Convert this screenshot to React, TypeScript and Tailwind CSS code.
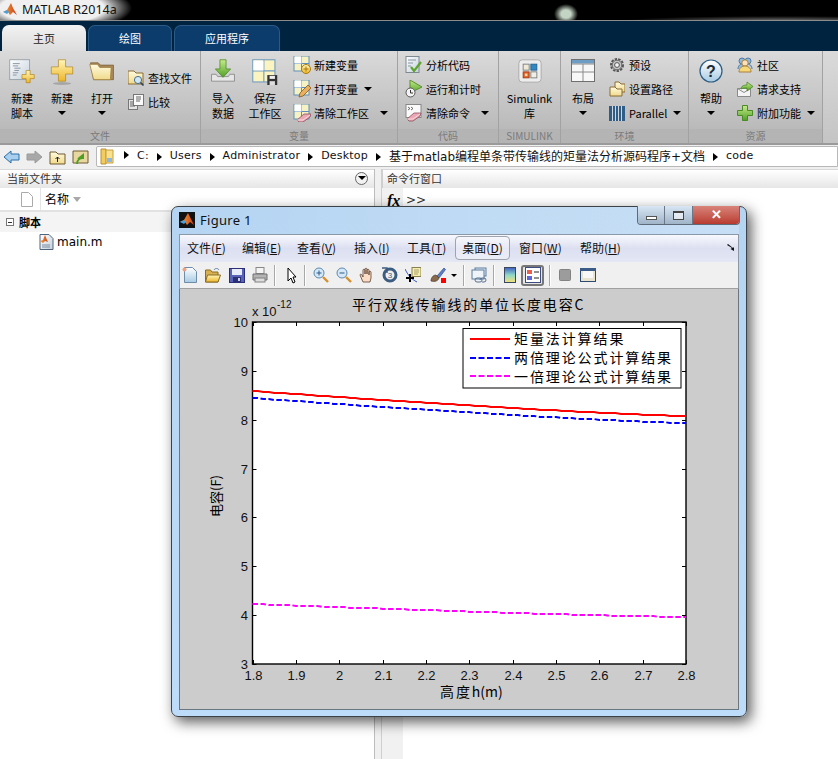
import React from 'react';

const cjk = 'font-["Noto_Sans_CJK_SC","Noto_Sans",sans-serif]';

const Arrow = ({ className = '' }: { className?: string }) => (
    <span className={`inline-block w-0 h-0 border-x-[4px] border-t-[4px] border-x-transparent border-t-black ${className}`} />
);

const PathTri = () => <span className="inline-block w-0 h-0 border-y-[4px] border-l-[5px] border-y-transparent border-l-black" />;

// shared gradients for the drawn icons
const Defs = () => (
    <svg className="absolute w-0 h-0">
        <defs>
            <linearGradient id="gold" x1="0" y1="0" x2="0" y2="1">
                <stop offset="0" stopColor="#fff6b8" />
                <stop offset="1" stopColor="#eeb62a" />
            </linearGradient>
            <linearGradient id="folder" x1="0" y1="0" x2="0" y2="1">
                <stop offset="0" stopColor="#fffbe0" />
                <stop offset="1" stopColor="#f0d98a" />
            </linearGradient>
            <linearGradient id="page" x1="0" y1="0" x2="1" y2="1">
                <stop offset="0" stopColor="#ffffff" />
                <stop offset="1" stopColor="#c4d0dc" />
            </linearGradient>
            <linearGradient id="green" x1="0" y1="0" x2="0" y2="1">
                <stop offset="0" stopColor="#c8ec8c" />
                <stop offset="1" stopColor="#4f9f26" />
            </linearGradient>
            <linearGradient id="ball" x1="0" y1="0" x2="0" y2="1">
                <stop offset="0" stopColor="#ffffff" />
                <stop offset="1" stopColor="#a8cbe4" />
            </linearGradient>
            <linearGradient id="cbar" x1="0" y1="0" x2="0" y2="1">
                <stop offset="0" stopColor="#3d5fc0" />
                <stop offset="0.5" stopColor="#8fd8c8" />
                <stop offset="1" stopColor="#f6e27a" />
            </linearGradient>
            <linearGradient id="matlab" x1="0" y1="0" x2="1" y2="0">
                <stop offset="0" stopColor="#f7a13a" />
                <stop offset="1" stopColor="#c8401a" />
            </linearGradient>
        </defs>
    </svg>
);

const Ic = ({ w = 16, h = 16, vb, children }: { w?: number; h?: number; vb?: string; children: React.ReactNode }) => (
    <svg width={w} height={h} viewBox={vb || `0 0 ${w} ${h}`} className="shrink-0 block">{children}</svg>
);

const Plus = ({ x, y, s }: { x: number; y: number; s: number }) => {
    const a = s / 3;
    return <path d={`M${x + a} ${y}h${a}v${a}h${a}v${a}h${-a}v${a}h${-a}v${-a}h${-a}v${-a}h${a}z`} fill="url(#gold)" stroke="#a87a10" strokeWidth="0.8" />;
};

const Grid4 = ({ x = 1, y = 0, s = 15 }: { x?: number; y?: number; s?: number }) => (
    <g>
        <rect x={x} y={y} width={s} height={s} fill="#f7f2c4" stroke="#5f8fb8" />
        <path d={`M${x + s / 2} ${y}v${s}M${x} ${y + s / 2}h${s}`} stroke="#5f8fb8" />
        <rect x={x + 0.5} y={y + 0.5} width={s / 2 - 0.5} height={s / 2 - 0.5} fill="#fff" />
    </g>
);

const Eraser = ({ x = 4, y = 9 }: { x?: number; y?: number }) => (
    <g transform={`translate(${x} ${y})`}>
        <path d="M0 7l7-6h7l-1 3-7 5H2z" fill="#eba8b4" stroke="#8a5060" strokeWidth="0.8" />
        <path d="M0 7h6l7-5" fill="none" stroke="#fbe4e8" strokeWidth="0.8" />
    </g>
);

const big = { w: 26, h: 26, vb: '0 0 34 34' };

const icons: Record<string, React.ReactNode> = {
    newScript: (
        <Ic {...big}>
            <rect x="1" y="1" width="26" height="26" fill="url(#page)" stroke="#8a959e" />
            <path d="M5 6h9M5 9h7M7 12h8M7 15h6M5 18h7M5 21h5" stroke="#6f7f8c" />
            <Plus x={17} y={15} s={16} />
        </Ic>
    ),
    bigPlus: (
        <Ic {...big}>
            <ellipse cx="17" cy="32" rx="12" ry="2" fill="#00000030" />
            <Plus x={3} y={1} s={28} />
        </Ic>
    ),
    bigFolder: (
        <Ic {...big}>
            <path d="M2 5h10l3 3h17v19H6z" fill="#a8885a" stroke="#7c6236" />
            <path d="M1 7h10l3 4h15l-1 16H6z" fill="url(#folder)" stroke="#9a7a3a" />
        </Ic>
    ),
    findFile: (
        <Ic>
            <path d="M0 1h6l2 2h7v11H0z" fill="url(#folder)" stroke="#8a6c34" />
            <circle cx="10" cy="10" r="3.6" fill="#cfe6f6" stroke="#4a6f8c" />
            <path d="M12.5 12.5l3 3" stroke="#2e4658" strokeWidth="1.6" />
        </Ic>
    ),
    compare: (
        <Ic>
            <rect x="0.5" y="5.5" width="9" height="10" fill="#e4e4e4" stroke="#777" />
            <rect x="5.5" y="0.5" width="10" height="11" fill="#fafafa" stroke="#777" />
            <path d="M8 3h5M8 5h5M8 7h4M2 8h3M2 10h3M2 12h5" stroke="#666" />
        </Ic>
    ),
    importData: (
        <Ic {...big}>
            <path d="M2 20h6l2 3h14l2-3h6v9H2z" fill="#e6e6e6" stroke="#7d7d7d" />
            <path d="M13 1h8v12h6L17 24 7 13h6z" fill="url(#green)" stroke="#4a8a22" />
        </Ic>
    ),
    saveWs: (
        <Ic {...big}>
            <rect x="1" y="1" width="29" height="29" fill="#fbf3c0" stroke="#6f9cc0" strokeWidth="1.4" />
            <path d="M15.5 1v29M1 15.5h29" stroke="#6f9cc0" strokeWidth="1.4" />
            <rect x="2" y="2" width="13" height="13" fill="#fff" />
            <rect x="20" y="21" width="13" height="13" fill="#333" />
            <rect x="23" y="22" width="7" height="4" fill="#eee" />
            <rect x="23" y="29" width="7" height="5" fill="#ddd" />
        </Ic>
    ),
    newVar: (
        <Ic w={18} h={18}>
            <Grid4 />
            <circle cx="13" cy="13" r="4.5" fill="url(#gold)" stroke="#a87a10" />
            <path d="M13 10.5v5M10.5 13h5" stroke="#a87a10" />
        </Ic>
    ),
    openVar: (
        <Ic w={18} h={18}>
            <Grid4 />
            <path d="M6 17l1-4 8-8 3 3-8 8z" fill="#eab060" stroke="#7c5a26" strokeWidth="0.8" />
        </Ic>
    ),
    clearWs: (
        <Ic w={18} h={18}>
            <Grid4 />
            <Eraser />
        </Ic>
    ),
    analyze: (
        <Ic w={18} h={18}>
            <rect x="1" y="0.5" width="13" height="16" fill="url(#page)" stroke="#7d8a94" />
            <path d="M3 4h8M3 7h5M3 10h3" stroke="#8795a0" />
            <path d="M6 11l3 4 7-9" fill="none" stroke="#5ea42c" strokeWidth="2.2" />
        </Ic>
    ),
    runTime: (
        <Ic w={18} h={18}>
            <path d="M5 0l12 7-12 6z" fill="url(#green)" stroke="#5a9030" />
            <circle cx="5.5" cy="12.5" r="4.5" fill="#f4f4f4" stroke="#555" />
            <path d="M5.5 10v3h2.5" fill="none" stroke="#333" />
        </Ic>
    ),
    clearCmd: (
        <Ic w={18} h={18}>
            <rect x="1" y="0.5" width="15" height="13" fill="#fafafa" stroke="#888" />
            <path d="M3 3l2 1.5L3 6M6 3l2 1.5L6 6" fill="none" stroke="#333" strokeWidth="0.7" />
            <Eraser x={2} y={8} />
        </Ic>
    ),
    simulink: (
        <Ic w={24} h={24} vb="0 0 28 28">
            <rect x="1" y="1" width="26" height="26" rx="4" fill="#ededed" stroke="#a5a5a5" />
            <rect x="6" y="6" width="7" height="7" fill="#efe9d8" stroke="#777" />
            <rect x="15" y="6" width="7" height="7" fill="#2f87c4" stroke="#1d5e8c" />
            <rect x="6" y="15" width="7" height="7" fill="#e2602a" stroke="#9a3a12" />
            <rect x="15" y="15" width="7" height="7" fill="#efefe6" stroke="#777" />
            <rect x="8" y="17" width="3" height="3" fill="#f7d9a8" />
        </Ic>
    ),
    layout: (
        <Ic w={24} h={24} vb="0 0 24 24">
            <rect x="0.5" y="0.5" width="23" height="22" fill="#f7f7f7" stroke="#6f6f6f" />
            <rect x="1" y="1" width="22" height="3.5" fill="#6d9cc4" />
            <path d="M12 5v17M1 13h22M1 5h22" stroke="#8a8a8a" />
        </Ic>
    ),
    gear: (
        <Ic>
            <circle cx="8" cy="8" r="6" fill="#d8d8d8" stroke="#555" strokeWidth="2" strokeDasharray="2.4 1.2" />
            <circle cx="8" cy="8" r="4.8" fill="#c4c4c4" stroke="#666" />
            <circle cx="8" cy="8" r="2.4" fill="#f3f3f3" stroke="#555" />
        </Ic>
    ),
    setPath: (
        <Ic>
            <path d="M6 1h4l2 2h4v8H6z" fill="url(#folder)" stroke="#8a6c34" />
            <path d="M1 6h5l2 2h5v7H1z" fill="url(#folder)" stroke="#8a6c34" />
        </Ic>
    ),
    parallel: (
        <Ic>
            <rect x="0" y="1" width="16" height="15" fill="#2f5d86" />
            <path d="M3.5 1v15M6.5 1v15M9.5 1v15M12.5 1v15" stroke="#cfd8e0" />
        </Ic>
    ),
    help: (
        <Ic w={24} h={24} vb="0 0 24 24">
            <circle cx="12" cy="12" r="11" fill="url(#ball)" stroke="#2d5c80" strokeWidth="1.2" />
            <text x="12" y="17.5" textAnchor="middle" fontSize="16" fontWeight="700" fontFamily="Liberation Sans" fill="#1c2a36">?</text>
        </Ic>
    ),
    community: (
        <Ic>
            <circle cx="5" cy="4" r="3" fill="#8fb8dc" stroke="#4f7aa4" />
            <circle cx="11" cy="4" r="3" fill="#8fb8dc" stroke="#4f7aa4" />
            <path d="M1 12c0-4 3-5 4-5s3 1 4 2M15 12c0-4-3-5-4-5" fill="#8fb8dc" stroke="#4f7aa4" />
            <circle cx="8" cy="6" r="3.2" fill="#fbe0ba" stroke="#a88040" />
            <path d="M2 15c0-4 3-6 6-6s6 2 6 6z" fill="#f6d878" stroke="#a88040" />
        </Ic>
    ),
    support: (
        <Ic>
            <path d="M0.5 7.5h13v8h-13z" fill="#f4f4f4" stroke="#8a8a8a" />
            <path d="M0.5 7.5l6.5 4 6.5-4" fill="none" stroke="#8a8a8a" />
            <path d="M4 8c0-3 3-4 6-4V1l6 4.5L10 10V7c-2 0-4 0-6 1z" fill="url(#green)" stroke="#4a8a22" strokeWidth="0.8" />
        </Ic>
    ),
    addon: (
        <Ic>
            <path d="M5.5 0.5h5v5h5v5h-5v5h-5v-5h-5v-5h5z" fill="url(#green)" stroke="#4a8a22" />
        </Ic>
    ),
};

const BigButton = ({ icon, lines, arrow, w = 40, className = '' }: { icon: string; lines: string[]; arrow?: boolean; w?: number; className?: string }) => (
    <div className={`flex flex-col items-center shrink-0 ${className}`} style={{ width: w }}>
        <div className="h-[34px] mt-[6px] pt-[2px] flex items-start justify-center">{icons[icon]}</div>
        {lines.map(l => <div key={l} className="h-[15px] leading-[15px] text-[11px] text-black whitespace-nowrap first:mt-[1px]">{l}</div>)}
        {arrow && <Arrow className="mt-[5px]" />}
    </div>
);

const SmallButton = ({ icon, label, arrow, w, gap = 4 }: { icon: string; label: string; arrow?: boolean; w?: number; gap?: number }) => (
    <div className="h-[24px] flex items-center text-[11px] text-black whitespace-nowrap" style={{ width: w, gap }}>
        {icons[icon]}
        <span>{label}</span>
        {arrow && <Arrow className="ml-auto" />}
    </div>
);

const Section = ({ title, width, children, last }: { title: string; width: number; children: React.ReactNode; last?: boolean }) => (
    <div className={`flex flex-col shrink-0 ${last ? '' : 'border-r border-r-[#a2a2a2]'}`} style={{ width }}>
        <div className="h-[78px] flex">{children}</div>
        <div className="h-[14px] leading-[14px] text-center text-[10px] text-[#7b7b7b] bg-[#b4b4b4]">{title}</div>
    </div>
);

const Ribbon = () => (
    <div className={`h-[92px] flex bg-gradient-to-b from-[#dadada] to-[#b4b4b4] ${cjk}`}>
        <Section title="文件" width={201}>
            <div className="flex pl-[2px]">
                <BigButton icon="newScript" lines={['新建', '脚本']} />
                <BigButton icon="bigPlus" lines={['新建']} arrow />
                <BigButton icon="bigFolder" lines={['打开']} arrow />
            </div>
            <div className="flex flex-col pl-[6px] pt-[15px]">
                <SmallButton icon="findFile" label="查找文件" />
                <SmallButton icon="compare" label="比较" />
            </div>
        </Section>
        <Section title="变量" width={197}>
            <div className="flex pl-[2px]">
                <BigButton icon="importData" lines={['导入', '数据']} />
                <BigButton icon="saveWs" lines={['保存', '工作区']} w={44} />
            </div>
            <div className="flex flex-col pl-[6px] pt-[2px]">
                <SmallButton icon="newVar" label="新建变量" gap={3} />
                <SmallButton icon="openVar" label="打开变量" arrow w={79} gap={3} />
                <SmallButton icon="clearWs" label="清除工作区" arrow w={95} gap={3} />
            </div>
        </Section>
        <Section title="代码" width={101}>
            <div className="flex flex-col pl-[7px] pt-[2px]">
                <SmallButton icon="analyze" label="分析代码" gap={3} />
                <SmallButton icon="runTime" label="运行和计时" gap={3} />
                <SmallButton icon="clearCmd" label="清除命令" arrow w={84} gap={3} />
            </div>
        </Section>
        <Section title="SIMULINK" width={62}>
            <div className="w-full flex justify-center">
                <BigButton icon="simulink" lines={['Simulink', '库']} />
            </div>
        </Section>
        <Section title="环境" width={128}>
            <div className="flex pl-[2px]">
                <BigButton icon="layout" lines={['布局']} arrow />
            </div>
            <div className="flex flex-col pl-[6px] pt-[2px]">
                <SmallButton icon="gear" label="预设" />
                <SmallButton icon="setPath" label="设置路径" />
                <SmallButton icon="parallel" label="Parallel" arrow w={72} />
            </div>
        </Section>
        <Section title="资源" width={134}>
            <div className="flex pl-[2px]">
                <BigButton icon="help" lines={['帮助']} arrow />
            </div>
            <div className="flex flex-col pl-[6px] pt-[2px]">
                <SmallButton icon="community" label="社区" />
                <SmallButton icon="support" label="请求支持" />
                <SmallButton icon="addon" label="附加功能" arrow w={78} />
            </div>
        </Section>
        <div className="flex-1 bg-gradient-to-b from-[#dadada] to-[#c4c4c4]" />
    </div>
);

const Tab = ({ label, active, w }: { label: string; active?: boolean; w: number }) => (
    <div
        className={`h-[26px] rounded-t-[7px] flex items-center justify-center text-[11px] ${active ? 'bg-gradient-to-b from-[#f2f2f2] to-[#dcdcdc] text-[#222]' : 'bg-[#0b3c6b] border border-b-0 border-[#2a5a88] text-white'}`}
        style={{ width: w }}
    >
        {label}
    </div>
);

const AddressBar = () => (
    <div className="h-[26px] pt-[1px] bg-[#efefef] border-t-2 border-t-[#9a9a9a] flex items-start">
        <div className="w-[96px] flex items-center gap-[6px] pl-[3px] h-[22px]">
            <Ic w={17} h={14}><path d="M1 7l7-6v3h8v6H8v3z" fill="#a8d0ee" stroke="#2a6ea8" /></Ic>
            <Ic w={17} h={14}><path d="M16 7L9 1v3H1v6h8v3z" fill="#a8a8a8" stroke="#9a9a9a" /></Ic>
            <Ic w={17} h={15}>
                <path d="M1 2h6l2 2h7v10H1z" fill="url(#folder)" stroke="#6e5a30" />
                <path d="M8.5 12V7M6.5 9l2-2 2 2" fill="none" stroke="#222" />
            </Ic>
            <Ic w={17} h={15}>
                <path d="M1 1h15v12H1z" fill="#e8d8a0" stroke="#6e5a30" />
                <path d="M5 14c0-4 3-6 6-6V5l-5 4" fill="none" stroke="#4f9f26" strokeWidth="2" />
            </Ic>
        </div>
        <div className={`flex-1 h-[21px] bg-white border border-[#b8b8b8] rounded-l-[2px] flex items-center gap-[8px] pl-[3px] text-[11px] tracking-[0.2px] text-[#111] whitespace-nowrap font-["DejaVu_Sans","Noto_Sans_CJK_SC",sans-serif]`}>
            <Ic w={14} h={17}>
                <path d="M1 1h5v15H1z" fill="#f2cc5e" stroke="#b89030" />
                <path d="M6 2h7v13H6z" fill="#f8e08c" stroke="#c8a040" />
                <path d="M7 10h5v4H7z" fill="#8fb8dc" />
            </Ic>
            <span className="ml-[2px]"><PathTri /></span>
            <span>C:</span>
            <PathTri />
            <span>Users</span>
            <PathTri />
            <span>Administrator</span>
            <PathTri />
            <span>Desktop</span>
            <PathTri />
            <span className="text-[12px] tracking-normal">基于matlab编程单条带传输线的矩量法分析源码程序+文档</span>
            <PathTri />
            <span>code</span>
        </div>
    </div>
);

const Workspace = () => (
    <div className={`flex-1 flex min-h-0 bg-[#ececec] ${cjk}`}>
        <div className="w-[375px] flex flex-col border-r border-r-[#bdbdbd]">
            <div className="h-[19px] flex items-center justify-between pl-[7px] pr-[6px] pb-[2px] text-[11px] text-[#333] bg-gradient-to-b from-white to-[#e6e6e6] border-t border-t-[#d8d8d8]">
                <span>当前文件夹</span>
                <span className="w-[13px] h-[13px] rounded-full border border-[#666] flex items-center justify-center bg-[#f2f2f2]"><Arrow /></span>
            </div>
            <div className="h-[24px] flex items-center bg-white border-b-2 border-b-[#e2e2e2]">
                <div className="w-[41px] h-full flex items-center justify-end pr-[7px] border-r border-r-[#e4e4e4]">
                    <Ic w={12} h={15}><path d="M0.5 0.5h7l4 4v10h-11z" fill="#fff" stroke="#aaa" /></Ic>
                </div>
                <span className="ml-[4px] text-[12px] text-black">名称</span>
                <span className="ml-[4px] inline-block w-0 h-0 border-x-[4px] border-t-[5px] border-x-transparent border-t-[#a8a8a8]" />
            </div>
            <div className="h-[20px] flex items-center pl-[6px] bg-[#f4f4f4] text-[11px] font-bold text-black">
                <span className="w-[8px] h-[8px] border border-[#777] flex items-center justify-center mr-[5px] bg-white"><span className="w-[4px] h-px bg-[#333]" /></span>
                脚本
            </div>
            <div className="h-[19px] flex items-center pl-[39px] bg-white text-[12px] text-black font-['DejaVu_Sans',sans-serif] gap-[3px]">
                <Ic w={15} h={16}>
                    <path d="M1 0.5h9l4 4v11H1z" fill="url(#page)" stroke="#50647c" />
                    <path d="M3 11h8M3 13h8" stroke="#7c8ca0" />
                    <path d="M1 7l3-1 2-5 2 5 1 2-3-1-2 2z" fill="url(#matlab)" />
                </Ic>
                <span>main.m</span>
            </div>
            <div className="flex-1 bg-white" />
        </div>
        <div className="w-[7px] bg-[#f0f0f0] border-r border-r-[#cfcfcf]" />
        <div className="flex-1 flex flex-col">
            <div className="h-[19px] flex items-center pl-[4px] pb-[2px] text-[11px] text-[#333] bg-gradient-to-b from-white to-[#e6e6e6] border-t border-t-[#d8d8d8] border-l border-l-[#cfcfcf]">命令行窗口</div>
            <div className="flex-1 flex">
                <div className="w-[21px] bg-[#f1f1f1] pl-[5px] pt-[1px] text-[16px] italic font-bold text-black font-['Liberation_Serif',serif] leading-[24px]">fx</div>
                <div className="flex-1 bg-white pl-[3px] text-[12px] text-[#333] leading-[24px] font-['DejaVu_Sans',sans-serif]">&gt;&gt;</div>
            </div>
        </div>
    </div>
);

const MENU: [string, string, number][] = [
    ['文件', 'F', 55], ['编辑', 'E', 55], ['查看', 'V', 57], ['插入', 'I', 53], ['工具', 'T', 48],
];

const MenuItem = ({ t, k, w, hi }: { t: string; k: string; w: number; hi?: boolean }) => (
    <div className={`h-[24px] flex items-center text-[12px] text-[#111] whitespace-nowrap ${hi ? 'justify-center border border-[#9ea3ad] rounded-[4px] bg-white/30' : ''}`} style={{ width: w }}>
        {t}(<span className="underline">{k}</span>)
    </div>
);

const Sep = ({ mx = 6 }: { mx?: number }) => <span className="w-px h-[21px] bg-[#a8a8a8] border-r border-r-white box-content shrink-0" style={{ marginLeft: mx, marginRight: mx }} />;

const FigToolbar = () => (
    <div className="h-[27px] flex items-center pl-[2px] bg-[#f0f0f0] border-b border-b-[#a0a0a0]">
        <Ic>
            <path d="M2.5 0.5h8l4 4v11h-12z" fill="url(#ball)" stroke="#6f8ca8" />
            <circle cx="2.5" cy="2.5" r="2" fill="#f2a080" />
        </Ic>
        <span className="w-[7px]" />
        <Ic>
            <path d="M0.5 3h5l1.5 2h6v10h-12.5z" fill="#d8b050" stroke="#8a6c24" />
            <path d="M0.5 15l2-7h13l-2.5 7z" fill="url(#gold)" stroke="#8a6c24" />
            <path d="M9 3c1-2 4-2 5 0" fill="none" stroke="#6080a0" />
        </Ic>
        <span className="w-[8px]" />
        <Ic>
            <rect x="0.5" y="1.5" width="15" height="14" fill="#5a62b8" stroke="#2a2f78" />
            <rect x="3" y="2" width="10" height="6" fill="#e8ecf8" />
            <rect x="4" y="10" width="8" height="5" fill="#2a2f78" />
            <rect x="9" y="11" width="2" height="3" fill="#d0d0e8" />
        </Ic>
        <span className="w-[7px]" />
        <Ic>
            <rect x="4" y="0.5" width="8" height="6" fill="#f4f4f4" stroke="#888" />
            <path d="M1 7h14v6H1z" fill="#b4b4b4" stroke="#707070" />
            <rect x="3" y="11" width="10" height="4" fill="#ddd" stroke="#808080" />
        </Ic>
        <Sep />
        <span className="w-[5px]" />
        <Ic w={10} h={17}><path d="M1 1v13l3-3 2 5 2-1-2-5h3z" fill="#fff" stroke="#000" /></Ic>
        <Sep mx={7} />
        <div className="flex items-center gap-[7px]">
            <Ic>
                <circle cx="6" cy="6" r="5" fill="#d4e8f8" stroke="#5c88ac" />
                <path d="M3.5 6h5M6 3.5v5" stroke="#2e5c84" />
                <path d="M10 10l5 5" stroke="#d8902c" strokeWidth="2.4" />
            </Ic>
            <Ic>
                <circle cx="6" cy="6" r="5" fill="#d4e8f8" stroke="#5c88ac" />
                <path d="M3.5 6h5" stroke="#2e5c84" />
                <path d="M10 10l5 5" stroke="#d8902c" strokeWidth="2.4" />
            </Ic>
            <Ic>
                <path d="M4 15L1 8c0-1 1-1 2 0l1 2V3c0-1 2-1 2 0v4V2c0-1 2-1 2 0v5V3c0-1 2-1 2 0v5-3c0-1 2-1 2 0v6l-1 4z" fill="#fbdcc4" stroke="#5a4030" strokeWidth="0.8" />
            </Ic>
            <Ic>
                <circle cx="8" cy="8" r="6" fill="none" stroke="#3c5c80" strokeWidth="3" />
                <path d="M0 1h5v5" fill="none" stroke="#3c5c80" strokeWidth="1.4" />
                <text x="8" y="11" textAnchor="middle" fontSize="8" fontFamily="Liberation Sans" fill="#3c5c80">3</text>
            </Ic>
            <Ic>
                <path d="M0 2c3 6 6 10 12 13" fill="none" stroke="#3058c8" />
                <rect x="7" y="0.5" width="9" height="9" fill="#f4eeb0" stroke="#888050" />
                <path d="M9 3h5M9 5h5M9 7h4" stroke="#888050" strokeWidth="0.7" />
                <path d="M5 7v8M1 11h8" stroke="#000" strokeWidth="2" />
            </Ic>
        </div>
        <span className="w-[9px]" />
        <Ic>
            <path d="M7 9L14 1l1.5 1.5L9 11z" fill="#5c80c8" stroke="#304c88" strokeWidth="0.7" />
            <path d="M1 14c0-3 2-6 5-6l3 3c-1 3-4 4-8 3z" fill="#8a6a4c" stroke="#4c3828" strokeWidth="0.7" />
            <rect x="11" y="11" width="5" height="5" fill="#f00" />
        </Ic>
        <span className="ml-[5px] inline-block w-0 h-0 border-x-[3px] border-t-[3px] border-x-transparent border-t-black" />
        <Sep mx={6} />
        <Ic>
            <rect x="4" y="1" width="11" height="8" fill="#dce8f4" stroke="#5c7c9c" />
            <rect x="1" y="3" width="12" height="9" fill="#eef4fa" stroke="#5c7c9c" />
            <path d="M4 13a2 2 0 0 1 2-2h3a2 2 0 0 1 0 4H6a2 2 0 0 1-2-2zM9 13a2 2 0 0 1 2-2h2a2 2 0 0 1 0 4h-2" fill="none" stroke="#557090" />
        </Ic>
        <Sep mx={6} />
        <span className="w-[3px]" />
        <Ic w={12} h={16}><rect x="0.5" y="0.5" width="11" height="15" fill="url(#cbar)" stroke="#384860" /></Ic>
        <span className="w-[5px]" />
        <div className="w-[23px] h-[21px] rounded-[3px] border-2 border-[#777] bg-[#e6e6e6] flex items-center justify-center">
            <Ic>
                <rect x="0.5" y="0.5" width="15" height="15" fill="#fff" stroke="#3c4c80" />
                <rect x="2" y="3" width="5" height="4" fill="#e8604c" />
                <rect x="2" y="9" width="5" height="4" fill="#5c68d8" />
                <path d="M9 5h5M9 11h5" stroke="#222" />
            </Ic>
        </div>
        <Sep mx={5} />
        <span className="w-[3px]" />
        <Ic w={12} h={12}><rect x="0.5" y="0.5" width="11" height="11" rx="1" fill="#9c9c9c" stroke="#828282" /></Ic>
        <span className="w-[9px]" />
        <Ic w={16} h={14}>
            <rect x="0.5" y="0.5" width="15" height="13" fill="#e8e4d0" stroke="#2e4a70" />
            <rect x="0" y="0" width="16" height="3" fill="#3c5c88" />
            <rect x="3" y="3" width="10" height="7" fill="#f8f8f8" />
        </Ic>
    </div>
);

// axes geometry in page pixels
const X0 = 252.5, X1 = 686, Y0 = 322, Y1 = 664;

const curve = (a: number, b: number) => {
    const pts: string[] = [];
    for (let i = 0; i <= 80; i++) {
        const t = i / 80;
        const y = Math.round(a + (b - a) * (1 - Math.pow(1 - t, 1.25)));
        pts.push(`${(X0 + (X1 - X0) * t).toFixed(1)},${y}`);
    }
    return pts.join(' ');
};

const tickFont = { fontFamily: '"Liberation Sans", sans-serif', fontSize: 13, fill: '#111' };
const zhFont = { fontFamily: '"Noto Sans CJK SC", sans-serif', fontSize: 14, fill: '#000', letterSpacing: 1.9 };

const Chart = () => {
    const xt = ['1.8', '1.9', '2', '2.1', '2.2', '2.3', '2.4', '2.5', '2.6', '2.7', '2.8'];
    const yt = [10, 9, 8, 7, 6, 5, 4, 3];
    return (
        <svg width="561" height="421" viewBox="180 289 561 421" className="block">
            <rect x={X0} y={Y0} width={X1 - X0} height={Y1 - Y0} fill="#fff" stroke="#000" strokeWidth="1.4" />
            {xt.map((l, i) => {
                const x = Math.round(X0 + (X1 - X0) * i / 10) + 0.5;
                return (
                    <g key={l}>
                        <path d={`M${x} ${Y0}v4M${x} ${Y1}v-4`} stroke="#000" />
                        <text x={x} y={680} textAnchor="middle" {...tickFont}>{l}</text>
                    </g>
                );
            })}
            {yt.map((l, i) => {
                const y = Math.round(Y0 + (Y1 - Y0) * i / 7) + 0.5;
                return (
                    <g key={l}>
                        <path d={`M${X0} ${y}h4M${X1} ${y}h-4`} stroke="#000" />
                        <text x={248} y={y + 4} textAnchor="end" {...tickFont}>{l}</text>
                    </g>
                );
            })}
            <polyline points={curve(391, 416)} fill="none" stroke="#f00" strokeWidth="2" />
            <polyline points={curve(398, 423)} fill="none" stroke="#00f" strokeWidth="2" strokeDasharray="5.5 2.5" />
            <polyline points={curve(604, 617)} fill="none" stroke="#f0f" strokeWidth="2" strokeDasharray="5.5 2.5" />
            <text x={252} y={316} {...tickFont}>x 10</text>
            <text x={277} y={308} {...tickFont} fontSize="10">-12</text>
            <text x={352} y={310} {...zhFont}>平行双线传输线的单位长度电容C</text>
            <text x={440} y={697} {...zhFont}>高度<tspan letterSpacing="0">h(m)</tspan></text>
            <text transform="translate(221 517) rotate(-90)" {...zhFont} fontSize="13" letterSpacing="0">电容(F)</text>
            <rect x="463" y="328.5" width="218" height="59.5" fill="#fff" stroke="#000" />
            <path d="M470 339h40" stroke="#f00" strokeWidth="2" />
            <path d="M470 358h40" stroke="#00f" strokeWidth="2" strokeDasharray="6 2.5" />
            <path d="M470 376h40" stroke="#f0f" strokeWidth="2" strokeDasharray="6 2.5" />
            <text x={514} y={344} {...zhFont}>矩量法计算结果</text>
            <text x={514} y={363} {...zhFont}>两倍理论公式计算结果</text>
            <text x={514} y={382} {...zhFont}>一倍理论公式计算结果</text>
        </svg>
    );
};

const Figure = () => (
    <div className={`absolute left-[171px] top-[206px] w-[576px] h-[511px] rounded-[7px] border border-[#3c4248] bg-gradient-to-b from-[#b4d4f2] to-[#bcdcfa] shadow-[4px_5px_14px_rgba(0,0,0,0.65)] flex flex-col px-[7px] pb-[6px] ${cjk}`}>
        <div className="h-[27px] shrink-0 flex items-start pt-[5px] relative bg-gradient-to-r from-transparent via-white/15 to-white/25">
            <Ic>
                <rect width="16" height="16" fill="#111" />
                <path d="M1 10l4-2 4-7 2 4 4 8-4-3-3 3-2-3z" fill="url(#matlab)" />
                <path d="M1 10l4-2 2 2-2 2z" fill="#4aa0d8" />
            </Ic>
            <span className="ml-[5px] text-[13px] leading-[17px] text-[#111] font-['Noto_Sans',sans-serif] tracking-[0.3px]">Figure 1</span>
            <div className="absolute -top-px right-[-1px] flex h-[19px] rounded-b-[4px] border border-t-0 border-[#5e6a78] overflow-hidden">
                <div className="w-[27px] flex items-center justify-center bg-gradient-to-b from-[#d8e6f4] to-[#a0b4c8] border-r border-r-[#6a7888]">
                    <span className="w-[11px] h-[4px] mt-[5px] bg-white border border-[#555]" />
                </div>
                <div className="w-[28px] flex items-center justify-center bg-gradient-to-b from-[#d8e6f4] to-[#a0b4c8] border-r border-r-[#6a7888]">
                    <span className="w-[11px] h-[9px] border border-[#444] border-t-2 bg-white/60" />
                </div>
                <div className="w-[46px] flex items-center justify-center bg-gradient-to-b from-[#d8837a] to-[#b83a30] text-white text-[13px] font-bold font-['Liberation_Sans',sans-serif]">✕</div>
            </div>
        </div>
        <div className="h-[28px] shrink-0 flex items-center pl-[7px] pb-[1px] border border-b-0 border-[#8a98a8] bg-gradient-to-b from-[#f8f9fd] via-[#dcdff0] to-[#e4e7f4]">
            {MENU.map(([t, k, w]) => <MenuItem key={k} t={t} k={k} w={w} />)}
            <MenuItem t="桌面" k="D" w={55} hi />
            <span className="w-[9px]" />
            <MenuItem t="窗口" k="W" w={61} />
            <MenuItem t="帮助" k="H" w={146} />
            <Ic w={10} h={10}><path d="M1 2l5 3-1.5 1L8 8V4L7 5 2 1z" fill="#111" /></Ic>
        </div>
        <div className="shrink-0 border-x border-[#8a98a8]"><FigToolbar /></div>
        <div className="flex-1 min-h-0 bg-[#cccccc] border border-t-0 border-[#6a7680] overflow-hidden"><Chart /></div>
    </div>
);

const App: React.FC = () => {
    return (
        <div className={`relative w-[838px] h-[759px] overflow-hidden flex flex-col bg-white ${cjk}`}>
            <Defs />
            <div className="h-[21px] shrink-0 flex items-center pl-[3px] border-b border-b-[#8c8c8c] bg-[radial-gradient(ellipse_12px_10px_at_566px_14px,#c4d4c4_40%,transparent_100%),radial-gradient(ellipse_160px_5px_at_780px_21px,#777_0%,transparent_100%),radial-gradient(ellipse_80px_24px_at_52px_8px,#f0f0f0_65%,#000_100%)] bg-black">
                <Ic w={14} h={14}>
                    <path d="M0 9l4-2 4-7 2 5 4 7-4-3-3 3-2-3z" fill="url(#matlab)" />
                    <path d="M0 9l4-2 2 2-2 2z" fill="#4aa0d8" />
                </Ic>
                <span className="ml-[5px] text-[12.5px] text-[#111] font-['Noto_Sans',sans-serif]">MATLAB R2014a</span>
            </div>
            <div className="h-[30px] shrink-0 flex items-end gap-[2px] pl-[2px] bg-[#00233f]">
                <Tab label="主页" active w={84} />
                <Tab label="绘图" w={84} />
                <Tab label="应用程序" w={106} />
            </div>
            <Ribbon />
            <AddressBar />
            <Workspace />
            <Figure />
        </div>
    );
};

export default App;
